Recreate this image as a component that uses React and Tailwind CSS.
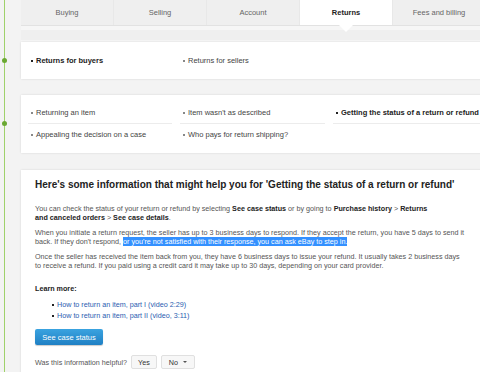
import React from 'react';

const tabs = ['Buying', 'Selling', 'Account', 'Returns', 'Fees and billing'];

const Bullet = ({ dark }) => (
  <span className={`inline-block w-[2px] h-[2px] mr-[3px] align-middle ${dark ? 'bg-[#222]' : 'bg-[#888]'}`} />
);

const Item = ({ children, active }) => (
  <div className={active ? 'font-bold text-[#222] whitespace-nowrap' : 'text-[#444] whitespace-nowrap'}>
    <Bullet dark={active} />
    {children}
  </div>
);

const App = () => {
  return (
    <div
      className="relative w-[480px] h-[372px] overflow-hidden bg-[#f3f3f3] text-[7.5px]"
      style={{ fontFamily: '"Liberation Sans", Arial, sans-serif' }}
    >
      {/* Left timeline */}
      <div className="absolute left-[4px] top-0 w-px h-full bg-[#9fd16a]" />
      <div className="absolute left-[2px] top-[58px] w-[5px] h-[5px] rounded-full bg-[#6aa832]" />
      <div className="absolute left-[2px] top-[121px] w-[5px] h-[5px] rounded-full bg-[#6aa832]" />

      <div className="ml-[21px] w-[480px]">
        {/* Tabs */}
        <div className="flex h-[26px] bg-[#efefef] border-b border-[#e2e2e2]">
          {tabs.map((t) => (
            <div
              key={t}
              className={`relative w-[93px] shrink-0 flex items-center justify-center border-r border-[#e8e8e8] ${
                t === 'Returns' ? 'bg-white font-bold text-[#222]' : 'text-[#666]'
              }`}
            >
              {t}
              {t === 'Returns' && (
                <span className="absolute left-1/2 -translate-x-1/2 top-full w-0 h-0 border-l-[7px] border-r-[7px] border-t-[7px] border-l-transparent border-r-transparent border-t-white" />
              )}
            </div>
          ))}
        </div>
        <div className="h-[16px] pt-[4px] bg-[#f6f6f6]">
          <div className="h-[10px] bg-[#efefef]" />
        </div>

        {/* Section 1 */}
        <div className="h-[37px] bg-white shadow-[0_0_2px_rgba(0,0,0,0.12)] grid grid-cols-[144px_145px_160px] gap-x-[8px] items-center px-[7px]">
          <div className="pl-[3px]">
            <Item active>Returns for buyers</Item>
          </div>
          <div className="pl-[3px]">
            <Item>Returns for sellers</Item>
          </div>
        </div>

        <div className="h-[16px]" />

        {/* Section 2 */}
        <div className="h-[58px] bg-white shadow-[0_0_2px_rgba(0,0,0,0.12)] grid grid-cols-[144px_145px_160px] content-center px-[7px] gap-x-[8px]">
          <div className="h-[22px] flex items-center border-b border-[#ececec] pl-[3px]">
            <Item>Returning an item</Item>
          </div>
          <div className="h-[22px] flex items-center border-b border-[#ececec] pl-[3px]">
            <Item>Item wasn't as described</Item>
          </div>
          <div className="h-[22px] flex items-center border-b border-[#ececec] pl-[3px]">
            <Item active>Getting the status of a return or refund</Item>
          </div>
          <div className="h-[22px] flex items-center pl-[3px]">
            <Item>Appealing the decision on a case</Item>
          </div>
          <div className="h-[22px] flex items-center pl-[3px]">
            <Item>Who pays for return shipping?</Item>
          </div>
        </div>

        <div className="h-[17px]" />

        {/* Section 3 */}
        <div className="h-[220px] bg-white shadow-[0_0_2px_rgba(0,0,0,0.12)] pl-[14px] pr-[20px] pt-[8px] text-[#555] text-[7.2px] leading-[9px]">
          <h2 className="text-[10px] font-bold text-[#222] leading-[14px]">
            Here's some information that might help you for 'Getting the status of a return or refund'
          </h2>
          <p className="mt-[12px] w-[432px]">
            You can check the status of your return or refund by selecting{' '}
            <b className="text-[#222]">See case status</b> or by going to{' '}
            <b className="text-[#222]">Purchase history</b> &gt; <b className="text-[#222]">Returns</b>
            <br />
            <b className="text-[#222]">and canceled orders</b> &gt; <b className="text-[#222]">See case details</b>.
          </p>
          <p className="mt-[6px] w-[432px]">
            When you initiate a return request, the seller has up to 3 business days to respond. If they accept the
            return, you have 5 days to send it back. If they don't respond,{' '}
            <span className="bg-[#3390ff] text-white">
              or you're not satisfied with their response, you can ask eBay to step in.
            </span>
          </p>
          <p className="mt-[6px] w-[432px]">
            Once the seller has received the item back from you, they have 6 business days to issue your refund. It
            usually takes 2 business days to receive a refund. If you paid using a credit card it may take up to 30
            days, depending on your card provider.
          </p>
          <div className="mt-[14px] font-bold text-[#222]">Learn more:</div>
          <ul className="mt-[6px] ml-[17px] text-[#2a5db0] leading-[11px]">
            <li>
              <Bullet dark />
              How to return an item, part I (video 2:29)
            </li>
            <li>
              <Bullet dark />
              How to return an item, part II (video, 3:11)
            </li>
          </ul>
          <button className="block mt-[8px] h-[16px] w-[68px] rounded-[2px] bg-gradient-to-b from-[#3aa3e0] to-[#1f80c4] text-white text-[7.5px] shadow-[0_1px_1px_rgba(0,0,0,0.2)]">
            See case status
          </button>
          <div className="mt-[10px] flex items-center gap-[4px]">
            <span>Was this information helpful?</span>
            <span className="h-[14px] px-[6px] flex items-center bg-[#f7f7f7] border border-[#e0e0e0] rounded-[2px] text-[#333]">
              Yes
            </span>
            <span className="h-[14px] px-[7px] flex items-center bg-[#f7f7f7] border border-[#e0e0e0] rounded-[2px] text-[#333]">
              No
              <span className="ml-[5px] w-0 h-0 border-l-[2px] border-r-[2px] border-t-[2px] border-l-transparent border-r-transparent border-t-[#555]" />
            </span>
          </div>
        </div>
      </div>
    </div>
  );
};

export default App;
